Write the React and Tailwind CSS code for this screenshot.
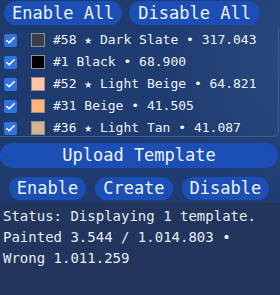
import { Check } from 'lucide-react'

const colors = [
  { id: 58, star: true, name: 'Dark Slate', count: '317.043', swatch: 'bg-[#3c4045]' },
  { id: 1, star: false, name: 'Black', count: '68.900', swatch: 'bg-[#000000]' },
  { id: 52, star: true, name: 'Light Beige', count: '64.821', swatch: 'bg-[#ffc5a5]' },
  { id: 31, star: false, name: 'Beige', count: '41.505', swatch: 'bg-[#ffb47a]' },
  { id: 36, star: true, name: 'Light Tan', count: '41.087', swatch: 'bg-[#d6b38c]' },
]

function Pill({ children, className = '' }) {
  return (
    <button className={`h-6 rounded-full bg-[#1b4fb6] px-2 text-[17px] leading-6 text-[#eef2fa] ${className}`}>
      {children}
    </button>
  )
}

function ColorRow({ c }) {
  return (
    <div className="flex h-[22px] shrink-0 items-center">
      <span className="ml-1 grid h-[13px] w-[13px] place-items-center rounded-[2px] bg-[#2f72e0]">
        <Check className="h-[11px] w-[11px] text-white" strokeWidth={3.5} />
      </span>
      <span className={`ml-[14px] h-[14px] w-[14px] border border-[#8a8f98] ${c.swatch}`} />
      <span className="ml-[8px] whitespace-nowrap text-[13px] text-[#eef2fa]">
        #{c.id} {c.star ? '★ ' : ''}{c.name} • {c.count}
      </span>
    </div>
  )
}

export default function App() {
  return (
    <div
      className="h-[295px] w-[280px] overflow-hidden bg-[#21355d]"
      style={{ fontFamily: '"DejaVu Sans Mono", "Liberation Mono", monospace' }}
    >
      <div className="bg-[radial-gradient(circle_at_110%_30%,#2a4a80_0%,#1f3c71_45%,#1e3a6d_100%)] pt-[1px] pb-[3px]">
        <div className="flex gap-[7px] pl-1">
          <Pill>Enable All</Pill>
          <Pill className="px-[9px]">Disable All</Pill>
        </div>

        <div className="mt-[4px] flex h-[108px] w-[279px] flex-col overflow-hidden rounded-br-md border-r border-b border-[#3f5b8c]">
          {colors.map(c => (
            <ColorRow key={c.id} c={c} />
          ))}
        </div>

        <button className="mt-[6px] h-[25px] w-[278px] rounded-full bg-[#1b4fb6] text-[17px] leading-[25px] text-[#eef2fa]">
          Upload Template
        </button>

        <div className="mt-[9px] flex w-[278px] justify-center gap-[9px]">
          <Pill className="h-[23px] leading-[23px]">Enable</Pill>
          <Pill className="h-[23px] leading-[23px]">Create</Pill>
          <Pill className="h-[23px] leading-[23px]">Disable</Pill>
        </div>
      </div>

      <div className="px-[3px] pt-[3px] text-[14px] leading-[21px] text-[#e6ebf4]">
        <div>Status: Displaying 1 template.</div>
        <div>Painted 3.544 / 1.014.803 •</div>
        <div>Wrong 1.011.259</div>
      </div>
    </div>
  )
}
